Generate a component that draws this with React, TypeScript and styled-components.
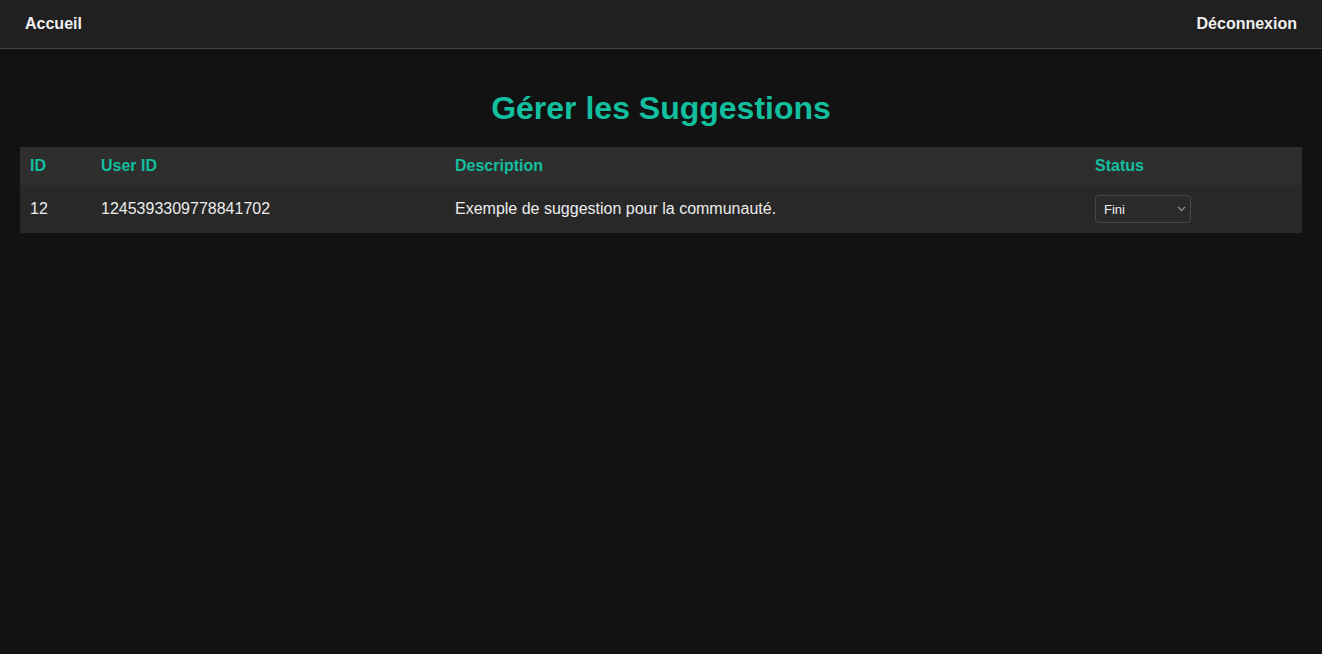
import styled, { createGlobalStyle } from "styled-components";

const GlobalStyle = createGlobalStyle`
    body {
        margin: 0;
        background: #121212;
        color: #e8e8e8;
        font-family: "Liberation Sans", Arial, sans-serif;
    }
`;

const Navbar = styled.nav`
    height: 48px;
    display: flex;
    align-items: center;
    justify-content: space-between;
    padding: 0 25px;
    background: #202020;
    border-bottom: 1px solid #444;
`;

const NavLink = styled.a`
    color: #f0f0f0;
    font-weight: bold;
    font-size: 16px;
    text-decoration: none;
`;

const Main = styled.main`
    padding: 41px 20px 20px;
`;

const Title = styled.h1`
    margin: 0 0 20px;
    text-align: center;
    color: #12bf9e;
    font-size: 32px;
    line-height: 37px;
`;

const Table = styled.table`
    width: 100%;
    border-collapse: collapse;
`;

const HeadRow = styled.tr`
    background: #2e2e2e;
`;

const Row = styled.tr`
    background: #282828;
`;

const Th = styled.th<{ $w?: string }>`
    text-align: left;
    padding: 10px;
    color: #12bf9e;
    font-size: 16px;
    line-height: 18px;
    width: ${(p) => p.$w ?? "auto"};
`;

const Td = styled.td`
    padding: 10px;
    font-size: 16px;
    line-height: 18px;
    color: #ececec;
`;

const SelectWrap = styled.div`
    position: relative;
    width: 96px;
    height: 28px;
`;

const Select = styled.select`
    appearance: none;
    width: 100%;
    height: 100%;
    padding: 0 20px 0 8px;
    background: #2a2a2a;
    color: #f0f0f0;
    border: 1px solid #464646;
    border-radius: 4px;
    font-family: "Liberation Sans", Arial, sans-serif;
    font-size: 13px;
    color-scheme: dark;
`;

const Chevron = styled.svg`
    position: absolute;
    right: 5px;
    top: 11px;
    pointer-events: none;
`;

const App = () => {
    return <>
        <GlobalStyle />
        <Navbar>
            <NavLink href="#">Accueil</NavLink>
            <NavLink href="#">Déconnexion</NavLink>
        </Navbar>
        <Main>
            <Title>Gérer les Suggestions</Title>
            <Table>
                <thead>
                    <HeadRow>
                        <Th $w="51px">ID</Th>
                        <Th $w="334px">User ID</Th>
                        <Th $w="620px">Description</Th>
                        <Th>Status</Th>
                    </HeadRow>
                </thead>
                <tbody>
                    <Row>
                        <Td>12</Td>
                        <Td>1245393309778841702</Td>
                        <Td>Exemple de suggestion pour la communauté.</Td>
                        <Td>
                            <SelectWrap>
                                <Select defaultValue="fini">
                                    <option value="attente">En attente</option>
                                    <option value="cours">En cours</option>
                                    <option value="fini">Fini</option>
                                </Select>
                                <Chevron width="9" height="6" viewBox="0 0 9 6">
                                    <path d="M1 1l3.5 3.5L8 1" fill="none" stroke="#8a8a8a" strokeWidth="1.3" />
                                </Chevron>
                            </SelectWrap>
                        </Td>
                    </Row>
                </tbody>
            </Table>
        </Main>
    </>
}

export default App;
